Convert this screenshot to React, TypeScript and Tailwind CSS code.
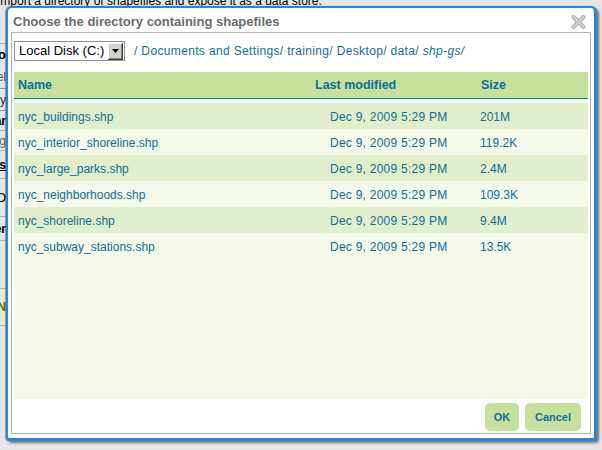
import React from "react";

const files = [
  { name: "nyc_buildings.shp", modified: "Dec 9, 2009 5:29 PM", size: "201M" },
  { name: "nyc_interior_shoreline.shp", modified: "Dec 9, 2009 5:29 PM", size: "119.2K" },
  { name: "nyc_large_parks.shp", modified: "Dec 9, 2009 5:29 PM", size: "2.4M" },
  { name: "nyc_neighborhoods.shp", modified: "Dec 9, 2009 5:29 PM", size: "109.3K" },
  { name: "nyc_shoreline.shp", modified: "Dec 9, 2009 5:29 PM", size: "9.4M" },
  { name: "nyc_subway_stations.shp", modified: "Dec 9, 2009 5:29 PM", size: "13.5K" },
];

// bits of the page behind the dialog, only a few pixels show on the left
const BackgroundPage = () => (
  <div>
    <p className="-mt-[6px] -ml-[3px] text-[12px] leading-[14px] text-black whitespace-nowrap">
      Import a directory of shapefiles and expose it as a data store.
    </p>
    <div className="-ml-[50px] w-[56px] flex flex-col text-right text-[12px] leading-[14px] whitespace-nowrap">
      <div className="h-[35px]" />
      <div className="h-px bg-[#a9b78e]" />
      <div className="h-[22px] flex items-center justify-end font-bold text-[13px] text-black">Info</div>
      <div className="h-[22px] flex items-center justify-end text-[#555]">Label</div>
      <div className="h-px bg-[#9a9a9a]" />
      <div className="h-[21px] flex items-center justify-end text-[#333]">Directory</div>
      <div className="h-px bg-[#9a9a9a]" />
      <div className="h-[19px] flex items-center justify-end font-bold text-black">Similar</div>
      <div className="h-px bg-[#b0b0b0]" />
      <div className="h-[19px] flex items-center justify-end text-[#666]">Config</div>
      <div className="h-px bg-[#b0b0b0]" />
      <div className="h-[27px] flex items-center justify-end font-bold underline text-black">Types</div>
      <div className="h-px bg-[#b0b0b0]" />
      <div className="h-[37px] flex items-center justify-end text-[13px] text-black">INFO</div>
      <div className="h-px bg-[#a9b78e]" />
      <div className="h-[23px] flex items-center justify-end font-bold text-black">Folder</div>
      <div className="h-px bg-[#b0b0b0]" />
      <div className="h-[47px]" />
      <div className="h-px bg-[#b0b0b0]" />
      <div className="h-[36px] flex items-center justify-end bg-[#e3eccf] font-bold text-[#5a7300]">CN</div>
      <div className="h-px bg-[#b0b0b0]" />
    </div>
  </div>
);

const CloseIcon = () => (
  <svg width="15" height="14" viewBox="0 0 15 14" className="mt-[1px]">
    <path d="M2.5 2 L12.5 12 M12.5 2 L2.5 12" stroke="#a8a8a8" strokeWidth="4" strokeLinecap="round" />
    <path d="M2.5 2 L12.5 12 M12.5 2 L2.5 12" stroke="#cfcfcf" strokeWidth="2.4" strokeLinecap="round" />
  </svg>
);

const DriveSelect = () => (
  <div className="w-[111px] h-[20px] border border-[#8e8e8e] bg-white flex items-center justify-between">
    <span className="pl-[4px] text-[13px] leading-[16px] text-black">Local Disk (C:)</span>
    <span className="w-[15px] h-[17px] mr-px flex items-center justify-center bg-[#d4d0c8] shadow-[inset_-1px_-1px_#404040,inset_1px_1px_#ffffff,inset_-2px_-2px_#808080]">
      <svg width="7" height="4" viewBox="0 0 7 4">
        <path d="M0 0 H7 L3.5 4 Z" fill="#000" />
      </svg>
    </span>
  </div>
);

export default function App() {
  return (
    <div className="relative w-[602px] h-[450px] overflow-hidden bg-[#e6e6e6] font-['Liberation_Sans',Arial,sans-serif]">
      <BackgroundPage />

      <div className="absolute left-[6px] top-[6px] w-[591px] h-[435px] flex flex-col bg-white border-t-2 border-l-2 border-r-[3px] border-b-[3px] border-[#2585e0] rounded-t-[6px] rounded-b-[4px] px-[3px] pb-[4px] shadow-[2px_2px_3px_rgba(0,0,0,0.5),-1px_0_1px_rgba(0,0,0,0.35)]">
        <div className="h-[24px] flex items-start justify-between pl-[2px] pr-[5px] pt-[6px]">
          <span className="text-[13px] leading-[16px] font-bold text-[#6b6b6b]">
            Choose the directory containing shapefiles
          </span>
          <CloseIcon />
        </div>

        <div className="w-[580px] h-[402px] border border-[#b4b4b4] p-[2px] flex flex-col">
          <div className="h-[37px] flex items-start pt-[6px]">
            <DriveSelect />
            <div className="ml-[9px] mt-[3px] text-[12px] leading-[14px] tracking-[0.35px] text-[#0e6f99] whitespace-nowrap">
              / Documents and Settings/ training/ Desktop/ data/ <i>shp-gs/</i>
            </div>
          </div>

          <div className="h-[327px] bg-[#f3f8e9] text-[#0e6f99]">
            <div className="grid grid-cols-[297px_166px_1fr] h-[27px] bg-[#c6e09e] border-b border-[#1a7aa0] text-[12.5px] leading-[26px] font-bold">
              <span className="pl-[4px]">Name</span>
              <span className="pl-[4px]">Last modified</span>
              <span className="pl-[4px]">Size</span>
            </div>
            <div className="pt-[4px]">
              {files.map((f, i) => (
                <div
                  key={f.name}
                  className={
                    "grid grid-cols-[297px_166px_1fr] h-[26px] text-[12px] leading-[26px] " +
                    (i % 2 === 0 ? "bg-[#e0eecb]" : "bg-[#f3f8e9]")
                  }
                >
                  <span className="pl-[4px] pt-px">{f.name}</span>
                  <span className="pl-[19px] pt-px tracking-[0.25px]">{f.modified}</span>
                  <span className="pl-[3px] pt-px">{f.size}</span>
                </div>
              ))}
            </div>
          </div>

          <div className="h-[32px] flex justify-end items-start pt-[4px] pr-[7px] gap-[6px]">
            <button className="w-[34px] h-[28px] rounded-[5px] bg-[#c6e09e] text-[11px] font-bold text-[#0e6f99]">
              OK
            </button>
            <button className="w-[56px] h-[28px] rounded-[5px] bg-[#c6e09e] text-[11px] font-bold text-[#0e6f99]">
              Cancel
            </button>
          </div>
        </div>
      </div>
    </div>
  );
}
